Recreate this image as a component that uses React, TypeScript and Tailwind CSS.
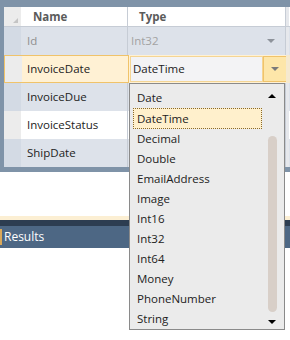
import React from "react";

const rows = [
  { name: "Id", type: "Int32", kind: "readonly" },
  { name: "InvoiceDate", type: "DateTime", kind: "selected" },
  { name: "InvoiceDue", type: "", kind: "alt" },
  { name: "InvoiceStatus", type: "", kind: "plain" },
  { name: "ShipDate", type: "", kind: "alt" },
];

const types = [
  "Date",
  "DateTime",
  "Decimal",
  "Double",
  "EmailAddress",
  "Image",
  "Int16",
  "Int32",
  "Int64",
  "Money",
  "PhoneNumber",
  "String",
];

function Caret({ up = false, color = "#000" }: { up?: boolean; color?: string }) {
  return (
    <svg width="8" height="4" viewBox="0 0 8 4">
      <polygon points={up ? "0,4 8,4 4,0" : "0,0 8,0 4,4"} fill={color} />
    </svg>
  );
}

function Row({ name, type, kind }: { name: string; type: string; kind: string }) {
  if (kind === "selected") {
    return (
      <div className="flex h-[28px]">
        <div className="flex w-[125px] border border-[#f0c36a] bg-[#fff1d4]">
          <div className="w-[17px] bg-[#ececec]" />
          <div className="flex items-center pl-[5px] text-[#222]">{name}</div>
        </div>
        <div className="flex w-[157px] items-stretch bg-[#fff1d4] py-[1px] pl-[1px]">
          <div className="flex flex-1 items-center border border-[#f4d594] bg-[#f3f3f5] pl-[2px] text-[#222]">
            {type}
          </div>
          <div className="flex w-[23px] items-center justify-center border-y border-l border-[#f0c36a] bg-[#fde6a9]">
            <Caret color="#7a7a7a" />
          </div>
        </div>
        <div className="w-[4px] bg-[#f5e9cf]" />
      </div>
    );
  }
  const alt = kind === "alt" || kind === "readonly";
  return (
    <div className={`flex h-[28px] ${alt ? "bg-[#dde2ea]" : "bg-white"}`}>
      <div className={`w-[17px] ${alt ? "bg-[#d3dae4]" : "bg-[#ececec]"}`} />
      <div
        className={`flex w-[107px] items-center border-r border-[#c6ccd5] pl-[6px] ${
          kind === "readonly" ? "text-[#8f8f8f]" : "text-[#222]"
        }`}
      >
        {name}
      </div>
      <div className="flex w-[158px] items-center justify-between border-r border-[#c6ccd5] pl-[3px] pr-[10px] text-[#a3a3a3]">
        <span>{type}</span>
        {kind === "readonly" && <Caret color="#8e939b" />}
      </div>
      <div className="w-[3px] bg-[#e6e8ec]" />
    </div>
  );
}

export default function App() {
  return (
    <div className="relative h-[340px] w-[290px] overflow-hidden bg-white font-['Open_Sans',sans-serif] text-[11.5px] leading-none">
      {/* grid panel */}
      <div className="bg-[#7f93a8] pb-[5px] pl-[4px] pt-[7px]">
        <div className="flex h-[20px] border-b border-[#c6ccd5] bg-white font-bold text-[#5b5b5b]">
          <div className="flex w-[17px] items-end justify-end bg-[#ececec] pb-[3px] pr-[3px]">
            <svg width="5" height="5" viewBox="0 0 5 5">
              <polygon points="5,0 5,5 0,5" fill="#c4c4c4" />
            </svg>
          </div>
          <div className="flex w-[107px] items-center border-r border-[#c6ccd5] pl-[12px]">Name</div>
          <div className="flex w-[158px] items-center border-r border-[#c6ccd5] pl-[11px]">Type</div>
          <div className="w-[3px] bg-[#e6e8ec]" />
        </div>
        {rows.map((r) => (
          <Row key={r.name} {...r} />
        ))}
      </div>

      <div className="h-[44px] bg-white" />
      <div className="h-[4px] bg-[#fcefd3]" />
      <div className="h-[6px] bg-[#2d3d51]" />
      <div className="flex h-[22px] items-center bg-[#4d6784] text-[12px] text-white">
        <div className="h-[16px] w-[2px] bg-[#d9a85a]" />
        <span className="pl-[2px]">Results</span>
      </div>

      {/* type dropdown */}
      <div className="absolute left-[129px] top-[83px] flex h-[247px] w-[156px] border border-[#8a8a8a] bg-[#ebebeb] text-[#222]">
        <div className="flex w-[134px] flex-col pt-[4px]">
          {types.map((t) => (
            <div
              key={t}
              className={`ml-[3px] flex h-[20px] w-[129px] items-center border pl-[3px] ${
                t === "DateTime"
                  ? "h-[21px] border-dotted border-[#8a6a2a] bg-[#fff0cc]"
                  : "border-transparent"
              }`}
            >
              {t}
            </div>
          ))}
        </div>
        <div className="flex w-[16px] flex-col items-center pt-[10px]">
          <Caret up />
          <div className="mt-[38px] h-[176px] w-[9px] rounded-full bg-[#d8cfc8]" />
          <div className="mt-[8px]">
            <Caret />
          </div>
        </div>
      </div>
    </div>
  );
}
